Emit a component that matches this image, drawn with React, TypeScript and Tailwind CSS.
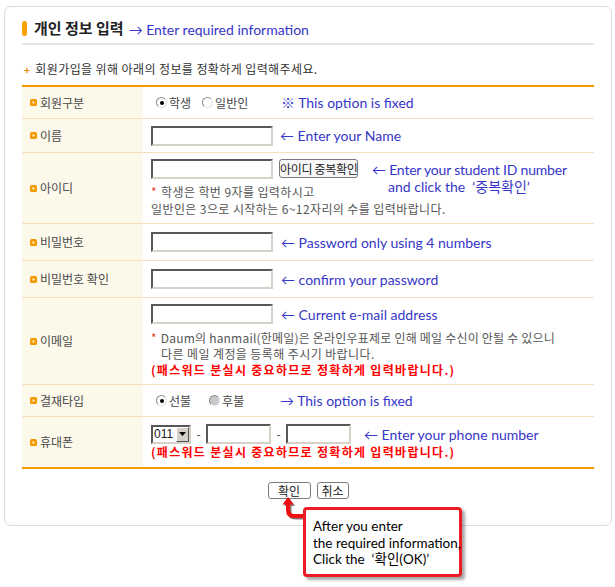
import type { ReactNode } from 'react';

// Korean body text and the blue hand-written notes laid over the form
const KO = "font-['Noto_Sans_CJK_KR','Noto_Sans_CJK_SC',sans-serif]";
const EN = "font-['Lato','Noto_Sans_CJK_KR',sans-serif]";

const Bullet = () => (
  <svg width="7" height="7" viewBox="0 0 7 7" className="shrink-0">
    <rect x="0" y="0" width="7" height="7" rx="1.6" fill="#f39a00" />
    <polygon points="2.6,1.8 2.6,5.2 5,3.5" fill="#fff4c8" />
  </svg>
);

const Note = ({ children, className = '' }: { children: ReactNode; className?: string }) => (
  <span className={`${EN} text-[14px] leading-[17px] text-[#3636c8] whitespace-nowrap ${className}`}>
    {children}
  </span>
);

const TextBox = ({ width }: { width: string }) => (
  <input
    readOnly
    className={`${width} h-[20px] shrink-0 border-2 border-[#d6d2ca] border-t-[#575757] border-l-[#575757] bg-white outline-none`}
  />
);

const Radio = ({ checked, disabled }: { checked?: boolean; disabled?: boolean }) => (
  <span
    className={`flex h-[11px] w-[11px] shrink-0 items-center justify-center rounded-full border border-[#8a8a8a] border-b-[#e2e2e2] border-r-[#e2e2e2] ${
      disabled ? 'bg-[#c9c9c9]' : 'bg-white'
    }`}
  >
    {checked && <span className="h-[4px] w-[4px] rounded-full bg-black" />}
  </span>
);

const Row = ({
  label,
  height,
  last,
  children,
}: {
  label: string;
  height: string;
  last?: boolean;
  children: ReactNode;
}) => (
  <div
    className={`flex ${height} ${
      last ? 'border-b-2 border-[#f59b00]' : 'border-b border-[#fbdcbd]'
    }`}
  >
    <div className="flex w-[121px] shrink-0 items-center gap-[3px] bg-[#fcf9ea] pl-[8px] text-[12px] text-[#4a4a4a]">
      <Bullet />
      <span>{label}</span>
    </div>
    <div className="flex-1 pl-[8px]">{children}</div>
  </div>
);

const Warn = () => (
  <div className="whitespace-nowrap text-[12px] font-bold leading-[16px] tracking-[1.3px] text-[#ff0000]">
    (패스워드 분실시 중요하므로 정확하게 입력바랍니다.)
  </div>
);

export default function App() {
  return (
    <div className={`relative h-[587px] w-[615px] overflow-hidden bg-white ${KO}`}>
      <div className="ml-[4px] mt-[6px] h-[520px] w-[608px] rounded-[7px] border border-[#dcdcdc] px-[17px] pt-[10px]">
        {/* title */}
        <div className="flex h-[22px] items-center">
          <span className="h-[15px] w-[5px] rounded-full bg-[#f7a000]" />
          <span className="ml-[7px] text-[15px] font-bold text-[#222]">개인 정보 입력</span>
          <span className={`${EN} ml-[5px] mt-[3px] text-[14px] text-[#3636c8]`}>
            → Enter required information
          </span>
        </div>
        <div className="mt-[4px] h-[2px] bg-[#e6e6e6]" />

        <div className="mt-[16px] flex h-[16px] items-center whitespace-nowrap text-[12px] tracking-[0.4px] text-[#333]">
          <span className="ml-[2px] mr-[5px] text-[10px] font-bold text-[#f08a00]">+</span>
          회원가입을 위해 아래의 정보를 정확하게 입력해주세요.
        </div>

        {/* form table */}
        <div className="mt-[8px] border-t-2 border-[#f59b00]">
          <Row label="회원구분" height="h-[32px]">
            <div className="flex h-full items-center">
              <div className="flex w-[130px] items-center text-[12px] text-[#444]">
                <span className="ml-[5px]"><Radio checked /></span>
                <span className="ml-[2px]">학생</span>
                <span className="ml-[11px]"><Radio /></span>
                <span className="ml-[2px]">일반인</span>
              </div>
              <Note>※ This option is fixed</Note>
            </div>
          </Row>

          <Row label="이름" height="h-[34px]">
            <div className="flex h-full items-center">
              <TextBox width="w-[122px]" />
              <Note className="ml-[7px]">← Enter your Name</Note>
            </div>
          </Row>

          <Row label="아이디" height="h-[71px]">
            <div className="flex flex-col pt-[6px]">
              <div className="flex h-[20px] items-start">
                <TextBox width="w-[122px]" />
                <button className="ml-[6px] h-[19px] w-[79px] shrink-0 whitespace-nowrap rounded-[3px] border border-[#7a7a7a] bg-[#f7f7f7] text-[12px] leading-none tracking-[-0.3px] text-[#222]">
                  아이디 중복확인
                </button>
                <div className="ml-[14px] mt-[2px] flex flex-col">
                  <Note className="tracking-[-0.2px]">← Enter your student ID number</Note>
                  <Note className="pl-[16px]">and click the &nbsp;‘중복확인’</Note>
                </div>
              </div>
              <div className="mt-[4px] whitespace-nowrap text-[12px] leading-[17px] tracking-[0.4px] text-[#555]">
                <div>
                  <span className="mr-[4px] text-[#e8402a]">*</span>학생은 학번 9자를 입력하시고
                </div>
                <div>일반인은 3으로 시작하는 6~12자리의 수를 입력바랍니다.</div>
              </div>
            </div>
          </Row>

          <Row label="비밀번호" height="h-[37px]">
            <div className="flex h-full items-center">
              <TextBox width="w-[122px]" />
              <Note className="ml-[8px]">← Password only using 4 numbers</Note>
            </div>
          </Row>

          <Row label="비밀번호 확인" height="h-[37px]">
            <div className="flex h-full items-center">
              <TextBox width="w-[122px]" />
              <Note className="ml-[8px]">← confirm your password</Note>
            </div>
          </Row>

          <Row label="이메일" height="h-[87px]">
            <div className="flex flex-col pt-[6px]">
              <div className="flex h-[20px] items-center">
                <TextBox width="w-[122px]" />
                <Note className="ml-[8px]">← Current e-mail address</Note>
              </div>
              <div className="mt-[6px] whitespace-nowrap text-[12px] leading-[16px] text-[#555]">
                <div className="tracking-[0.2px]">
                  <span className="mr-[4px] text-[#e8402a]">*</span>Daum의 hanmail(한메일)은 온라인우표제로 인해 메일 수신이 안될 수 있으니
                </div>
                <div className="pl-[10px] tracking-[0.4px]">다른 메일 계정을 등록해 주시기 바랍니다.</div>
                <Warn />
              </div>
            </div>
          </Row>

          <Row label="결재타입" height="h-[32px]">
            <div className="flex h-full items-center">
              <div className="flex w-[129px] items-center text-[12px] text-[#444]">
                <span className="ml-[5px]"><Radio checked /></span>
                <span className="ml-[2px]">선불</span>
                <span className="ml-[18px]"><Radio disabled /></span>
                <span className="ml-[2px]">후불</span>
              </div>
              <Note>→ This option is fixed</Note>
            </div>
          </Row>

          <Row label="휴대폰" height="h-[52px]" last>
            <div className="flex flex-col pt-[7px]">
              <div className="flex h-[20px] items-center text-[12px] text-[#444]">
                <div className="flex h-[19px] w-[40px] shrink-0 items-center justify-between border-2 border-[#d6d2ca] border-t-[#575757] border-l-[#575757] bg-white pl-[1px]">
                  <span className="font-['Liberation_Sans',sans-serif] text-[12px] leading-none text-[#222]">011</span>
                  <span className="flex h-[15px] w-[13px] items-center justify-center border border-[#fff] border-b-[#555] border-r-[#555] bg-[#d4d0c8]">
                    <svg width="7" height="4" viewBox="0 0 7 4">
                      <polygon points="0,0 7,0 3.5,4" fill="#000" />
                    </svg>
                  </span>
                </div>
                <span className="mx-[5px] w-[5px] text-center">-</span>
                <TextBox width="w-[65px]" />
                <span className="mx-[5px] w-[5px] text-center">-</span>
                <TextBox width="w-[65px]" />
                <Note className="ml-[13px]">← Enter your phone number</Note>
              </div>
              <Warn />
            </div>
          </Row>
        </div>

        <div className="mt-[13px] flex justify-center gap-[6px]">
          <button className="h-[17px] w-[43px] rounded-[3px] border border-[#7a7a7a] bg-white text-[12px] leading-none text-[#222]">
            확인
          </button>
          <button className="h-[17px] w-[32px] rounded-[3px] border border-[#7a7a7a] bg-white text-[12px] leading-none text-[#222]">
            취소
          </button>
        </div>
      </div>

      {/* red pointer to the OK button */}
      <svg className="absolute left-[276px] top-[492px]" width="32" height="30" viewBox="0 0 32 30">
        <g transform="translate(1.5 1.5)" opacity="0.55">
          <path d="M12 11 V18 Q12 24 18 24 H30" stroke="#3a0000" strokeWidth="4" fill="none" />
          <polygon points="12,5 6.5,12.5 17.5,12.5" fill="#3a0000" />
        </g>
        <path d="M12 11 V18 Q12 24 18 24 H30" stroke="#ee1111" strokeWidth="4" fill="none" />
        <polygon points="12,5 6.5,12.5 17.5,12.5" fill="#ee1111" />
      </svg>

      {/* callout */}
      <div className="absolute left-[303px] top-[507px] h-[70px] w-[159px] rounded-[4px] border-[3px] border-[#ec1c24] bg-white pl-[7px] pt-[8px] shadow-[3px_3px_3px_rgba(0,0,0,0.35)]">
        <div className={`${EN} whitespace-nowrap text-[13.5px] leading-[16.5px] text-black`}>
          <div>After you enter</div>
          <div>the required information,</div>
          <div>Click the &nbsp;‘확인(OK)’</div>
        </div>
      </div>
    </div>
  );
}
